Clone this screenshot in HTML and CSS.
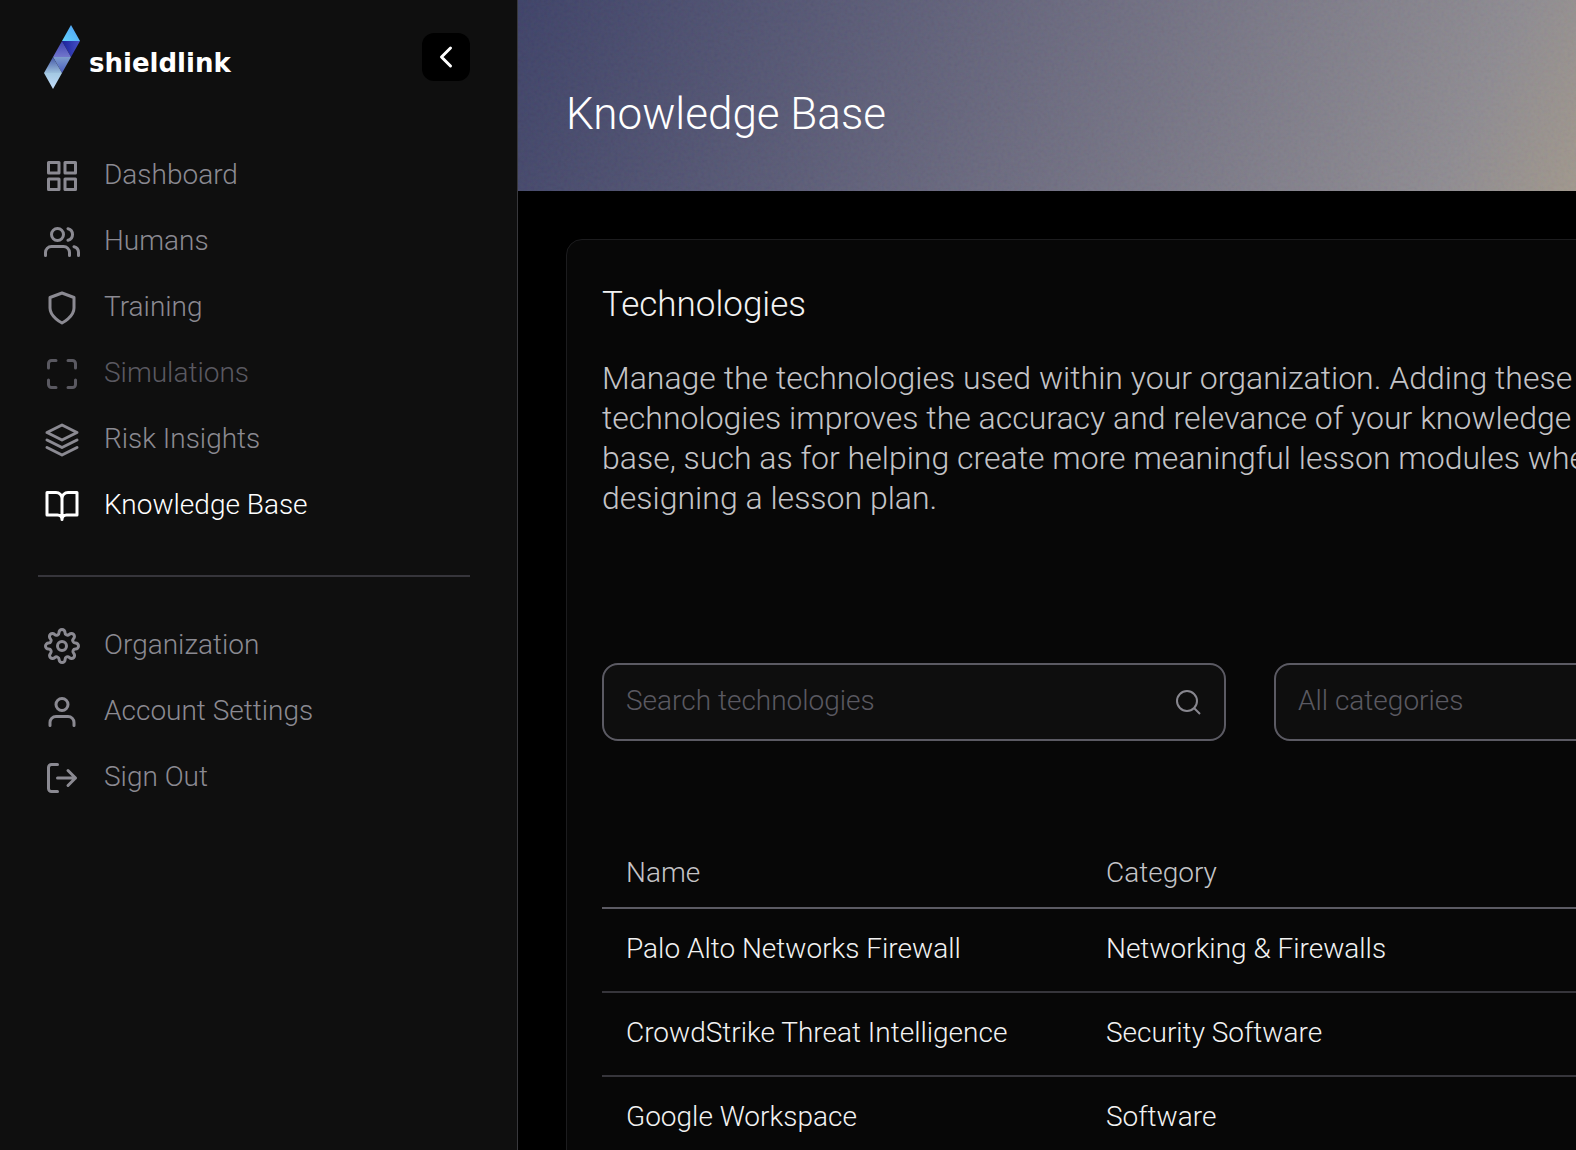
FILE: index.html
```html
<!DOCTYPE html>
<html lang="en">
<head>
  <meta charset="utf-8">
  <meta name="viewport" content="width=device-width, initial-scale=1">
  <title>Knowledge Base</title>
  <link rel="stylesheet" href="styles.css">
</head>
<body>
  <div class="app">
    <aside class="sidebar">
      <div class="sidebar-head">
        <a class="brand" href="#">
          <svg class="brand-mark" viewBox="0 0 36 64" aria-hidden="true">
            <defs>
              <linearGradient id="g1" x1="0" y1="1" x2="1" y2="0"><stop offset="0" stop-color="#62d2fb"/><stop offset="1" stop-color="#4f9df5"/></linearGradient>
              <linearGradient id="g2" x1="0" y1="0" x2="1" y2="0"><stop offset="0" stop-color="#1a229c"/><stop offset="1" stop-color="#4650c4"/></linearGradient>
              <linearGradient id="g3" x1="0" y1="0" x2="0" y2="1"><stop offset="0" stop-color="#3d43b0"/><stop offset="1" stop-color="#7276cc"/></linearGradient>
              <linearGradient id="g4" x1="0" y1="0" x2="0" y2="1"><stop offset="0" stop-color="#7d9dcc"/><stop offset="1" stop-color="#4a5cc0"/></linearGradient>
              <linearGradient id="g5" x1="0" y1="0" x2="0" y2="1"><stop offset="0" stop-color="#4558a8"/><stop offset="1" stop-color="#9cc0dc"/></linearGradient>
              <linearGradient id="g6" x1="0" y1="0" x2="0" y2="1"><stop offset="0" stop-color="#a3c8e2"/><stop offset="1" stop-color="#c4defa"/></linearGradient>
            </defs>
            <path fill="url(#g1)" d="M27 0 36 16H18z"/>
            <path fill="url(#g2)" d="M18 16H36L27 32z"/>
            <path fill="url(#g3)" d="M18 16 27 32H9z"/>
            <path fill="url(#g4)" d="M9 32H27L18 48z"/>
            <path fill="url(#g5)" d="M9 32 18 48H0z"/>
            <path fill="url(#g6)" d="M0 48H18L9 64z"/>
          </svg>
          <span class="brand-name">shieldlink</span>
        </a>
        <button class="collapse" type="button" aria-label="Collapse sidebar">
          <svg viewBox="0 0 48 48" aria-hidden="true"><path d="M28.5 15 19.5 24 28.5 33"/></svg>
        </button>
      </div>

      <nav class="nav" aria-label="Main">
        <a class="nav-item" href="#">
          <svg class="icon" viewBox="0 0 24 24" aria-hidden="true"><path d="M3 3h7v7H3zM14 3h7v7h-7zM14 14h7v7h-7zM3 14h7v7H3z"/></svg>
          <span class="nav-label">Dashboard</span>
        </a>
        <a class="nav-item" href="#">
          <svg class="icon" viewBox="0 0 24 24" aria-hidden="true"><path d="M17 21v-2a4 4 0 0 0-4-4H5a4 4 0 0 0-4 4v2"/><circle cx="9" cy="7" r="4"/><path d="M23 21v-2a4 4 0 0 0-3-3.87M16 3.13a4 4 0 0 1 0 7.75"/></svg>
          <span class="nav-label">Humans</span>
        </a>
        <a class="nav-item" href="#">
          <svg class="icon" viewBox="0 0 24 24" aria-hidden="true"><path d="M12 22s8-4 8-10V5l-8-3-8 3v7c0 6 8 10 8 10z"/></svg>
          <span class="nav-label">Training</span>
        </a>
        <a class="nav-item is-disabled" aria-disabled="true" href="#">
          <svg class="icon" viewBox="0 0 24 24" aria-hidden="true"><path d="M3 8V5a2 2 0 0 1 2-2h3M16 3h3a2 2 0 0 1 2 2v3M21 16v3a2 2 0 0 1-2 2h-3M8 21H5a2 2 0 0 1-2-2v-3"/></svg>
          <span class="nav-label">Simulations</span>
        </a>
        <a class="nav-item" href="#">
          <svg class="icon" viewBox="0 0 24 24" aria-hidden="true"><path d="M12 2 2 7l10 5 10-5-10-5zM2 17l10 5 10-5M2 12l10 5 10-5"/></svg>
          <span class="nav-label">Risk Insights</span>
        </a>
        <a class="nav-item is-active" aria-current="page" href="#">
          <svg class="icon" viewBox="0 0 24 24" aria-hidden="true"><path d="M2 3h6a4 4 0 0 1 4 4v14a3 3 0 0 0-3-3H2zM22 3h-6a4 4 0 0 0-4 4v14a3 3 0 0 1 3-3h7z"/></svg>
          <span class="nav-label">Knowledge Base</span>
        </a>
      </nav>

      <hr class="divider">

      <nav class="nav" aria-label="Account">
        <a class="nav-item" href="#">
          <svg class="icon" viewBox="0 0 24 24" aria-hidden="true"><circle cx="12" cy="12" r="3"/><path d="M19.4 15a1.65 1.65 0 0 0 .33 1.82l.06.06a2 2 0 0 1 0 2.83 2 2 0 0 1-2.83 0l-.06-.06a1.65 1.65 0 0 0-1.82-.33 1.65 1.65 0 0 0-1 1.51V21a2 2 0 0 1-2 2 2 2 0 0 1-2-2v-.09A1.65 1.65 0 0 0 9 19.4a1.65 1.65 0 0 0-1.82.33l-.06.06a2 2 0 0 1-2.83 0 2 2 0 0 1 0-2.83l.06-.06a1.65 1.65 0 0 0 .33-1.82 1.65 1.65 0 0 0-1.51-1H3a2 2 0 0 1-2-2 2 2 0 0 1 2-2h.09A1.65 1.65 0 0 0 4.6 9a1.65 1.65 0 0 0-.33-1.82l-.06-.06a2 2 0 0 1 0-2.83 2 2 0 0 1 2.83 0l.06.06a1.65 1.65 0 0 0 1.82.33H9a1.65 1.65 0 0 0 1-1.51V3a2 2 0 0 1 2-2 2 2 0 0 1 2 2v.09a1.65 1.65 0 0 0 1 1.51 1.65 1.65 0 0 0 1.82-.33l.06-.06a2 2 0 0 1 2.83 0 2 2 0 0 1 0 2.83l-.06.06a1.65 1.65 0 0 0-.33 1.82V9a1.65 1.65 0 0 0 1.51 1H21a2 2 0 0 1 2 2 2 2 0 0 1-2 2h-.09a1.65 1.65 0 0 0-1.51 1z"/></svg>
          <span class="nav-label">Organization</span>
        </a>
        <a class="nav-item" href="#">
          <svg class="icon" viewBox="0 0 24 24" aria-hidden="true"><path d="M20 21v-2a4 4 0 0 0-4-4H8a4 4 0 0 0-4 4v2"/><circle cx="12" cy="7" r="4"/></svg>
          <span class="nav-label">Account Settings</span>
        </a>
        <a class="nav-item" href="#">
          <svg class="icon" viewBox="0 0 24 24" aria-hidden="true"><path d="M9 21H5a2 2 0 0 1-2-2V5a2 2 0 0 1 2-2h4M16 17l5-5-5-5M21 12H9"/></svg>
          <span class="nav-label">Sign Out</span>
        </a>
      </nav>
    </aside>

    <main class="main">
      <header class="banner">
        <svg class="grain" aria-hidden="true">
          <filter id="grain" x="0" y="0" width="100%" height="100%"><feTurbulence type="fractalNoise" baseFrequency="0.3" numOctaves="2" seed="4"/><feColorMatrix values="1 0 0 0 0  0 1 0 0 0  0 0 1 0 0  0 0 0 0 1"/></filter>
          <rect width="100%" height="100%" filter="url(#grain)"/>
        </svg>
        <h1 class="page-title">Knowledge Base</h1>
      </header>

      <section class="card" aria-labelledby="tech-title">
        <h2 class="card-title" id="tech-title">Technologies</h2>
        <p class="card-text">Manage the technologies used within your organization. Adding these technologies improves the accuracy and relevance of your knowledge base, such as for helping create more meaningful lesson modules when designing a lesson plan.</p>

        <form class="filters">
          <label class="field">
            <input class="field-input" type="text" placeholder="Search technologies" aria-label="Search technologies">
            <svg class="field-icon" viewBox="0 0 30 30" aria-hidden="true"><circle cx="14" cy="14" r="10"/><path d="M21 21 27 27"/></svg>
          </label>
          <label class="field">
            <input class="field-input" type="text" placeholder="All categories" aria-label="All categories">
          </label>
        </form>

        <table class="table">
          <thead>
            <tr><th scope="col">Name</th><th scope="col">Category</th></tr>
          </thead>
          <tbody>
            <tr><td>Palo Alto Networks Firewall</td><td>Networking &amp; Firewalls</td></tr>
            <tr><td>CrowdStrike Threat Intelligence</td><td>Security Software</td></tr>
            <tr><td>Google Workspace</td><td>Software</td></tr>
          </tbody>
        </table>
      </section>
    </main>
  </div>
</body>
</html>
```
FILE: styles.css
```css
* {
  box-sizing: border-box;
}

body {
  margin: 0;
  background: #000;
  color: #f2f2f2;
  font-family: Roboto, "Liberation Sans", sans-serif;
  font-size: 28px;
  font-weight: 300;
  line-height: 36px;
}

.app {
  display: flex;
  height: 100vh;
  overflow: hidden;
}

/* Sidebar */

.sidebar {
  flex: none;
  width: 518px;
  padding: 25px 47px 0 38px;
  background: #0f0f0f;
  border-right: 1px solid #38383c;
}

.sidebar-head {
  display: flex;
  align-items: flex-start;
  justify-content: space-between;
  height: 118px;
  padding-left: 6px;
}

.brand {
  display: flex;
  align-items: flex-end;
  gap: 9px;
  color: #fff;
  text-decoration: none;
}

.brand-mark {
  width: 36px;
  height: 64px;
}

.brand-name {
  padding-bottom: 9px;
  font: bold 26px/34px "DejaVu Sans", sans-serif;
}

.collapse {
  width: 48px;
  height: 48px;
  margin-top: 8px;
  padding: 0;
  border: 0;
  border-radius: 12px;
  background: #000;
}

.collapse svg {
  display: block;
  fill: none;
  stroke: #fff;
  stroke-width: 3;
  stroke-linecap: round;
  stroke-linejoin: round;
}

.nav {
  display: flex;
  flex-direction: column;
}

.nav-item {
  display: flex;
  align-items: center;
  gap: 24px;
  height: 66px;
  padding-left: 6px;
  color: #8b8a92;
  text-decoration: none;
}

.nav-item.is-disabled {
  color: #5a5961;
}

.nav-item.is-active {
  color: #fff;
}

.nav-label {
  padding-bottom: 2px;
}

.icon {
  width: 36px;
  height: 36px;
  fill: none;
  stroke: currentColor;
  stroke-width: 2;
  stroke-linecap: round;
  stroke-linejoin: round;
}

.divider {
  height: 2px;
  margin: 36px 0;
  border: 0;
  background: #36353b;
}

/* Main column */

.main {
  flex: 1;
  min-width: 0;
  overflow: hidden;
}

.banner {
  position: relative;
  padding: 86px 48px 49px;
  background: linear-gradient(115deg, #3a3e65 0%, #6a697e 50%, #8d8a90 88%, #9f968b 100%);
}

.grain {
  position: absolute;
  inset: 0;
  width: 100%;
  height: 100%;
  opacity: 0.06;
}

.page-title {
  position: relative;
  margin: 0;
  color: #fff;
  font-size: 44px;
  font-weight: inherit;
  line-height: 56px;
}

.card {
  width: 1440px;
  margin: 48px;
  padding: 40px 35px;
  background: #070707;
  border: 1px solid #1c1c1e;
  border-radius: 16px;
}

.card-title {
  margin: 0 0 28px;
  font-size: 35px;
  font-weight: inherit;
  line-height: 50px;
}

.card-text {
  max-width: 1008px;
  margin: 0 0 145px;
  color: #c4c4c7;
  font-size: 32px;
  line-height: 40px;
}

.filters {
  display: flex;
  gap: 48px;
  margin-bottom: 90px;
}

.field {
  position: relative;
  width: 624px;
}

.field-input {
  display: block;
  width: 100%;
  height: 78px;
  padding: 0 22px 4px;
  background: #0e0e0e;
  border: 2px solid #5b5a63;
  border-radius: 16px;
  color: inherit;
  font: inherit;
}

.field-input::placeholder {
  color: #5a5961;
  opacity: 1;
}

.field-icon {
  position: absolute;
  top: 24px;
  right: 23px;
  width: 30px;
  height: 30px;
  fill: none;
  stroke: #88878f;
  stroke-width: 2;
}

.table {
  width: 100%;
  border-collapse: separate;
  border-spacing: 0;
  table-layout: fixed;
}

.table th,
.table td {
  height: 84px;
  padding: 0 24px 2px;
  border-bottom: 2px solid #36353b;
  font-weight: inherit;
  text-align: left;
}

.table th {
  height: 78px;
  padding: 8px 24px 0;
  border-color: #5b5a63;
  color: #c4c4c7;
}

.table th:first-child {
  width: 480px;
}
```
